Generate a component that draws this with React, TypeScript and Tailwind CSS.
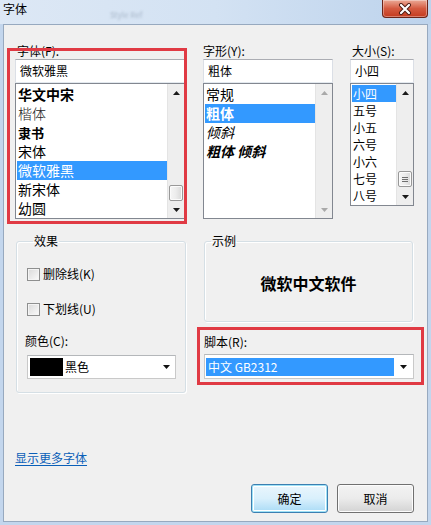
import React from "react";

const F = "font-['Noto_Sans_CJK_SC',sans-serif]";

const Arrow = ({ dir, color = "#111" }: { dir: "up" | "down"; color?: string }) => (
  <svg width="7" height="4" viewBox="0 0 7 4">
    {dir === "up" ? (
      <polygon points="3.5,0 7,4 0,4" fill={color} />
    ) : (
      <polygon points="0,0 7,0 3.5,4" fill={color} />
    )}
  </svg>
);

function ScrollBar({ thumb, disabled, grip }: { thumb?: string; disabled?: boolean; grip?: boolean }) {
  const c = disabled ? "#a9a9a9" : "#1a1a1a";
  return (
    <div className="w-[17px] h-full shrink-0 flex flex-col bg-[#eeeeee] border-l border-[#e4e4e4]">
      <div className="h-[17px] shrink-0 flex items-center justify-center">
        <Arrow dir="up" color={c} />
      </div>
      <div className="flex-1 min-h-0">
        {thumb ? (
          <div
            className={`${thumb} mx-[1px] rounded-[2px] border border-[#989898] bg-gradient-to-r from-[#f6f6f6] via-[#ececec] to-[#d8d8d8] flex flex-col items-center justify-center gap-[1px] shadow-[inset_0_0_0_1px_#fbfbfb]`}
          >
            {grip && (
              <>
                <span className="block w-[6px] h-[1px] bg-[#6f6f6f]" />
                <span className="block w-[6px] h-[1px] bg-[#6f6f6f]" />
                <span className="block w-[6px] h-[1px] bg-[#6f6f6f]" />
              </>
            )}
          </div>
        ) : null}
      </div>
      <div className="h-[17px] shrink-0 flex items-center justify-center">
        <Arrow dir="down" color={c} />
      </div>
    </div>
  );
}

const inputCls =
  "h-[24px] bg-white border border-[#abadb3] border-l-[#dbdfe6] border-r-[#dbdfe6] border-b-[#e3e9ef] flex items-center pl-[4px] text-[12px] leading-[16px] text-black";

const Check = ({ label }: { label: string }) => (
  <div className="h-[16px] flex items-center">
    <span className="block w-[13px] h-[13px] border border-[#8e8f8f] bg-gradient-to-br from-[#d9d9d9] to-[#fbfbfb] shadow-[inset_0_0_0_1px_#f4f4f4]" />
    <span className="ml-[3px] text-[12px] leading-[16px] text-black">{label}</span>
  </div>
);

export default function App() {
  return (
    <div className={`w-[431px] h-[525px] overflow-hidden bg-[#c3d6ed] flex flex-col ${F}`}>
      {/* Title bar */}
      <div className="h-[24px] shrink-0 flex items-start bg-gradient-to-r from-[#dde8f5] via-[#d3e2f3] to-[#bdd3ec]">
        <span className="ml-[3px] mt-[1px] text-[12px] leading-[16px] text-black">字体</span>
        <span className="ml-[83px] mt-[10px] text-[8px] leading-[10px] text-[#a9b8ca] blur-[1px]">Style Ref</span>
        <div className="ml-auto mr-[3px] w-[46px] h-[18px] rounded-b-[4px] border border-t-0 border-[#6b2419] bg-gradient-to-b from-[#eaa996] via-[#d45a40] to-[#c43a1e] flex items-center justify-center shadow-[inset_0_0_0_1px_rgba(255,255,255,0.35)]">
          <svg width="14" height="12" viewBox="0 0 14 12">
            <path d="M3 2 L11 10 M11 2 L3 10" stroke="#4a1a12" strokeWidth="4" strokeLinecap="round" />
            <path d="M3 2 L11 10 M11 2 L3 10" stroke="#ffffff" strokeWidth="2.2" strokeLinecap="round" />
          </svg>
        </div>
      </div>

      {/* Window body */}
      <div className="flex-1 px-[3px] pb-[3px] flex">
        <div className="relative flex-1 bg-[#f0f0f0] border border-[#97a9bf] flex flex-col">
          {/* Top row: font / style / size */}
          <div className="pt-[18px] pl-[11px] flex">
            {/* Font */}
            <div className="w-[170px] flex flex-col">
              <div className="h-[16px] pl-[2px] text-[12px] leading-[16px] text-black">字体(F):</div>
              <div className={inputCls}>微软雅黑</div>
              <div className="h-[136px] bg-white border border-[#828790] flex">
                <div className="flex-1 pt-[1px] flex flex-col text-[14px] leading-[19px] text-black">
                  <div className="h-[19px] pl-[2px] font-bold">华文中宋</div>
                  <div className="h-[19px] pl-[2px] font-light text-[#222]">楷体</div>
                  <div className="h-[19px] pl-[2px] font-bold text-[13px]">隶书</div>
                  <div className="h-[19px] pl-[2px]">宋体</div>
                  <div className="h-[19px] ml-[1px] pl-[1px] bg-[#3399ff] text-white">微软雅黑</div>
                  <div className="h-[19px] pl-[2px]">新宋体</div>
                  <div className="h-[19px] pl-[2px]">幼圆</div>
                </div>
                <ScrollBar thumb="mt-[84px] h-[16px]" />
              </div>
            </div>

            {/* Style */}
            <div className="ml-[18px] w-[130px] flex flex-col">
              <div className="h-[16px] text-[12px] leading-[16px] text-black">字形(Y):</div>
              <div className={inputCls}>粗体</div>
              <div className="h-[136px] bg-white border border-[#828790] flex">
                <div className="flex-1 pt-[1px] flex flex-col text-[14px] leading-[19px] text-black">
                  <div className="h-[19px] pl-[2px]">常规</div>
                  <div className="h-[19px] ml-[1px] pl-[1px] bg-[#3399ff] text-white font-bold">粗体</div>
                  <div className="h-[19px] pl-[2px] italic">倾斜</div>
                  <div className="h-[19px] pl-[2px] italic font-bold">粗体 倾斜</div>
                </div>
                <ScrollBar disabled />
              </div>
            </div>

            {/* Size */}
            <div className="ml-[17px] w-[64px] flex flex-col">
              <div className="h-[16px] pl-[2px] text-[12px] leading-[16px] text-black">大小(S):</div>
              <div className={inputCls}>小四</div>
              <div className="h-[123px] bg-white border border-[#828790] flex">
                <div className="flex-1 pt-[1px] flex flex-col text-[12px] leading-[17px] text-black">
                  <div className="h-[17px] ml-[1px] pl-[1px] bg-[#3399ff] text-white">小四</div>
                  <div className="h-[17px] pl-[2px]">五号</div>
                  <div className="h-[17px] pl-[2px]">小五</div>
                  <div className="h-[17px] pl-[2px]">六号</div>
                  <div className="h-[17px] pl-[2px]">小六</div>
                  <div className="h-[17px] pl-[2px]">七号</div>
                  <div className="h-[17px] pl-[2px]">八号</div>
                </div>
                <ScrollBar thumb="mt-[70px] h-[16px]" grip />
              </div>
            </div>
          </div>

          {/* Second row */}
          <div className="mt-[15px] flex">
            {/* Effects */}
            <fieldset className="ml-[12px] w-[170px] h-[159px] border border-[#d5dfe5] rounded-[3px] shadow-[inset_1px_1px_0_#ffffff,1px_1px_0_#ffffff] pl-[10px]">
              <legend className="ml-[6px] px-[1px] text-[12px] leading-[14px] text-black">效果</legend>
              <div className="mt-[18px]">
                <Check label="删除线(K)" />
              </div>
              <div className="mt-[19px]">
                <Check label="下划线(U)" />
              </div>
              <div className="mt-[16px] -ml-[2px] h-[16px] text-[12px] leading-[16px] text-black">颜色(C):</div>
              <div className="mt-[6px] w-[149px] h-[24px] bg-white border border-[#c9c9c9] border-t-[#b4b7ba] flex items-center">
                <span className="ml-[2px] block w-[33px] h-[18px] bg-black" />
                <span className="ml-[2px] text-[12px] leading-[16px] text-black">黑色</span>
                <span className="ml-auto mr-[5px] flex items-center">
                  <Arrow dir="down" />
                </span>
              </div>
            </fieldset>

            {/* Sample + script */}
            <div className="ml-[18px] w-[210px] flex flex-col">
              <fieldset className="w-[209px] h-[88px] border border-[#d5dfe5] rounded-[3px] shadow-[inset_1px_1px_0_#ffffff,1px_1px_0_#ffffff]">
                <legend className="ml-[6px] px-[1px] text-[12px] leading-[14px] text-black">示例</legend>
                <div className="h-[70px] flex items-center justify-center text-[16px] leading-[20px] font-bold text-black">
                  微软中文软件
                </div>
              </fieldset>
              <div className="mt-[12px] h-[16px] text-[12px] leading-[16px] text-black">脚本(R):</div>
              <div className="mt-[4px] w-[210px] h-[25px] bg-white border border-[#c9c9c9] border-t-[#b4b7ba] flex items-center">
                <div className="ml-[1px] w-[188px] h-[18px] bg-[#3399ff] text-white text-[12px] leading-[18px] pl-[2px]">
                  中文 GB2312
                </div>
                <span className="ml-auto mr-[6px] flex items-center">
                  <Arrow dir="down" />
                </span>
              </div>
            </div>
          </div>

          {/* Link */}
          <div className="mt-[57px] pl-[11px] h-[16px] text-[12px] leading-[16px]">
            <span className="text-[#0a5fb8] underline underline-offset-[2px]">显示更多字体</span>
          </div>

          {/* Buttons */}
          <div className="mt-[18px] pr-[13px] flex justify-end gap-[9px]">
            <button className="w-[77px] h-[29px] rounded-[3px] border border-[#3c7fb1] bg-gradient-to-b from-[#eaf6fd] via-[#d9f0fc] to-[#a9dbf6] shadow-[inset_0_0_0_1px_#9fe2f7,inset_0_0_0_2px_#ffffff] text-[12px] leading-[16px] text-black">
              确定
            </button>
            <button className="w-[77px] h-[29px] rounded-[3px] border border-[#707070] bg-gradient-to-b from-[#f3f3f3] via-[#ebebeb] to-[#d3d3d3] shadow-[inset_0_0_0_1px_#fcfcfc] text-[12px] leading-[16px] text-black">
              取消
            </button>
          </div>

          {/* Red annotation boxes */}
          <div className="absolute left-[3px] top-[23px] w-[180px] h-[176px] border-[3px] border-[#e03a44] pointer-events-none" />
          <div className="absolute left-[193px] top-[302px] w-[227px] h-[58px] border-[3px] border-[#e03a44] pointer-events-none" />
        </div>
      </div>
    </div>
  );
}
